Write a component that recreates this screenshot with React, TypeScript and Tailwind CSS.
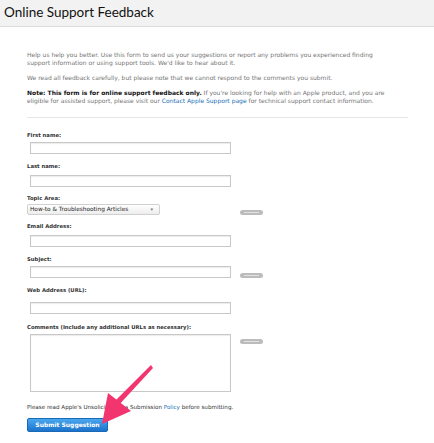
import React from 'react';

const Pill = () => (
  <div className="flex h-[5px] w-[23px] items-center justify-center rounded-full bg-[#bcbcbc]">
    <div className="h-[1px] w-[15px] bg-[#e2e2e2]" />
  </div>
);

const Field = ({
  label,
  mt = 'mt-[8px]',
  gap = 'mt-[4px]',
  pill = false,
}: {
  label: string;
  mt?: string;
  gap?: string;
  pill?: boolean;
}) => (
  <div className={mt}>
    <div className="text-[5.3px] font-bold leading-[8px] text-[#333]">{label}</div>
    <div className={`${gap} flex items-start`}>
      <div className="ml-[3px] h-[12px] w-[201px] border border-[#c8c8c8] bg-white shadow-[inset_0_1px_1px_rgba(0,0,0,0.08)]" />
      {pill && <div className="ml-[9px] mt-[7px]"><Pill /></div>}
    </div>
  </div>
);

export default function App() {
  return (
    <div className="relative h-[443px] w-[434px] overflow-hidden bg-white" style={{ fontFamily: '"DejaVu Sans", sans-serif' }}>
      <div className="flex h-[27px] items-center border-b border-[#dcdcdc] bg-[#f2f2f2] px-[4px]">
        <h1 className="text-[13.5px] leading-none text-[#111]" style={{ fontFamily: 'Lato, sans-serif' }}>
          Online Support Feedback
        </h1>
      </div>

      <div className="pl-[27px] pr-[20px] pt-[24px]">
        <div className="whitespace-nowrap text-[6px] leading-[8px] text-[#757575]">
          <p>
            Help us help you better. Use this form to send us your suggestions or report any problems you experienced finding
            <br />
            support information or using support tools. We'd like to hear about it.
          </p>
          <p className="mt-[7px]">We read all feedback carefully, but please note that we cannot respond to the comments you submit.</p>
          <p className="mt-[7px]">
            <span className="font-bold text-[#111]">Note: This form is for online support feedback only.</span> If you're looking for help with an Apple product, and you are
            <br />
            eligible for assisted support, please visit our <span className="text-[#1a6fb8]">Contact Apple Support page</span> for technical support contact information.
          </p>
        </div>

        <div className="mt-[12px] h-[1px] w-[381px] bg-[#e6e6e6]" />

        <Field label="First name:" mt="mt-[13px]" gap="mt-[3px]" />
        <Field label="Last name:" mt="mt-[8px]" gap="mt-[5px]" />

        <div className="mt-[7px]">
          <div className="text-[5.3px] font-bold leading-[8px] text-[#333]">Topic Area:</div>
          <div className="mt-[2px] flex items-start">
            <div className="flex h-[11px] w-[133px] items-center justify-between rounded-[2px] border border-[#d0d0d0] bg-gradient-to-b from-white to-[#ededed] px-[2px]">
              <span className="text-[5.8px] leading-none text-[#222]">How-to &amp; Troubleshooting Articles</span>
              <span className="mr-[4px] text-[5px] leading-none text-[#777]">▾</span>
            </div>
            <div className="ml-[80px] mt-[6px]"><Pill /></div>
          </div>
        </div>

        <Field label="Email Address:" mt="mt-[7px]" gap="mt-[5px]" />
        <Field label="Subject:" mt="mt-[8px]" gap="mt-[3px]" pill />
        <Field label="Web Address (URL):" mt="mt-[8px]" gap="mt-[8px]" />

        <div className="mt-[9px]">
          <div className="text-[5.3px] font-bold leading-[8px] text-[#333]">Comments (Include any additional URLs as necessary):</div>
          <div className="mt-[3px] flex items-start">
            <div className="ml-[3px] h-[58px] w-[201px] border border-[#c8c8c8] bg-white shadow-[inset_0_1px_1px_rgba(0,0,0,0.08)]" />
            <div className="ml-[9px] mt-[5px]"><Pill /></div>
          </div>
        </div>

        <p className="mt-[11px] text-[5.6px] leading-[8px] text-[#333]">
          Please read Apple's Unsolicited Idea Submission <span className="text-[#1a6fb8]">Policy</span> before submitting.
        </p>

        <button className="mt-[7px] flex h-[14px] w-[81px] items-center justify-center rounded-[2px] border border-[#1869b8] bg-gradient-to-b from-[#4aa8ee] to-[#1b73cc] text-[6px] font-bold leading-none text-white">
          Submit Suggestion
        </button>
      </div>

      <svg className="absolute left-0 top-0" width="434" height="443" viewBox="0 0 434 443">
        <polygon points="151,365 153,368 117,407 113,403" fill="#f2346f" />
        <polygon points="102,424 108,393 131,411" fill="#f2346f" />
      </svg>
    </div>
  );
}
